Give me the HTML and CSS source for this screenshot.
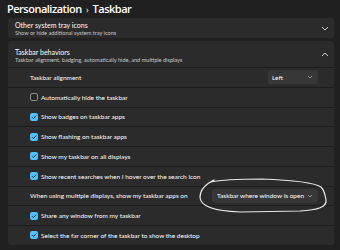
FILE: index.html
```html
<!DOCTYPE html>
<html>
<head>
<meta charset="utf-8">
<link rel="stylesheet" href="styles.css">
</head>
<body>
<div class="page">
  <h1 class="title">Personalization <span class="sep">›</span> Taskbar</h1>
  <div class="cards">
    <div class="card head-card small">
      <div class="head-text">
        <div class="h-title">Other system tray icons</div>
        <div class="h-sub">Show or hide additional system tray icons</div>
      </div>
      <svg class="chev" width="8" height="5" viewBox="0 0 8 5"><path d="M1 1 L4 4 L7 1" fill="none" stroke="#d0d0d0" stroke-width="1"/></svg>
    </div>
    <div class="card">
      <div class="head-card big">
        <div class="head-text">
          <div class="h-title">Taskbar behaviors</div>
          <div class="h-sub">Taskbar alignment, badging, automatically hide, and multiple displays</div>
        </div>
        <svg class="chev" width="8" height="5" viewBox="0 0 8 5"><path d="M1 4 L4 1 L7 4" fill="none" stroke="#d0d0d0" stroke-width="1"/></svg>
      </div>
      <div class="row">
        <span class="label">Taskbar alignment</span>
        <div class="select sel-left"><span>Left</span><svg width="6" height="4" viewBox="0 0 6 4"><path d="M1 1 L3 3 L5 1" fill="none" stroke="#aaa" stroke-width="0.8"/></svg></div>
      </div>
      <div class="row"><span class="box"></span><span class="label">Automatically hide the taskbar</span></div>
      <div class="row"><span class="box on"><svg viewBox="0 0 8 8"><path d="M2 4.2 L3.4 5.6 L6.2 2.6" fill="none" stroke="#1b1b1b" stroke-width="0.9"/></svg></span><span class="label">Show badges on taskbar apps</span></div>
      <div class="row"><span class="box on"><svg viewBox="0 0 8 8"><path d="M2 4.2 L3.4 5.6 L6.2 2.6" fill="none" stroke="#1b1b1b" stroke-width="0.9"/></svg></span><span class="label">Show flashing on taskbar apps</span></div>
      <div class="row"><span class="box on"><svg viewBox="0 0 8 8"><path d="M2 4.2 L3.4 5.6 L6.2 2.6" fill="none" stroke="#1b1b1b" stroke-width="0.9"/></svg></span><span class="label">Show my taskbar on all displays</span></div>
      <div class="row"><span class="box on"><svg viewBox="0 0 8 8"><path d="M2 4.2 L3.4 5.6 L6.2 2.6" fill="none" stroke="#1b1b1b" stroke-width="0.9"/></svg></span><span class="label">Show recent searches when I hover over the search icon</span></div>
      <div class="row">
        <span class="label">When using multiple displays, show my taskbar apps on</span>
        <div class="select sel-wide"><span>Taskbar where window is open</span><svg width="6" height="4" viewBox="0 0 6 4"><path d="M1 1 L3 3 L5 1" fill="none" stroke="#aaa" stroke-width="0.8"/></svg></div>
      </div>
      <div class="row"><span class="box on"><svg viewBox="0 0 8 8"><path d="M2 4.2 L3.4 5.6 L6.2 2.6" fill="none" stroke="#1b1b1b" stroke-width="0.9"/></svg></span><span class="label">Share any window from my taskbar</span></div>
      <div class="row"><span class="box on"><svg viewBox="0 0 8 8"><path d="M2 4.2 L3.4 5.6 L6.2 2.6" fill="none" stroke="#1b1b1b" stroke-width="0.9"/></svg></span><span class="label">Select the far corner of the taskbar to show the desktop</span></div>
    </div>
  </div>
  <svg class="scribble" width="340" height="250" viewBox="0 0 340 250">
    <path d="M214 180 C206 184 200 190 200 197 C200 206 214 211 240 212 L300 211 C318 210 327 207 326 200 C325 193 324 190 321 187 C313 182 290 180 262 179 C240 179 224 179 211 182" fill="none" stroke="#e8e8e8" stroke-width="1.2" stroke-linecap="round"/>
  </svg>
</div>
</body>
</html>
```
FILE: styles.css
```css
html, body {
  margin: 0;
  padding: 0;
}
body {
  background: #202020;
  width: 340px;
  height: 250px;
  overflow: hidden;
  font-family: "Lato", "Open Sans", sans-serif;
  color: #ffffff;
}
.page {
  position: relative;
  width: 340px;
  height: 250px;
}
.title {
  margin: 0;
  padding: 0 0 0 7px;
  height: 18px;
  line-height: 17px;
  font-family: "Open Sans", sans-serif;
  font-size: 11px;
  font-weight: 600;
  letter-spacing: -0.5px;
  white-space: nowrap;
}
.title .sep {
  font-size: 8px;
  color: #cfcfcf;
  padding: 0 2px;
}
.cards {
  margin: 0 6px 0 8px;
  display: flex;
  flex-direction: column;
  gap: 3px;
}
.card {
  background: #2b2b2b;
  border-radius: 3px;
}
.head-card {
  display: flex;
  align-items: center;
  justify-content: space-between;
  padding: 0 5px 0 7px;
}
.head-card.small {
  height: 20px;
}
.head-card.big {
  height: 26px;
}
.h-title {
  font-size: 7px;
  line-height: 8px;
  color: #ffffff;
}
.h-sub {
  font-size: 5.6px;
  line-height: 7px;
  color: #c8c8c8;
}
.head-card.big .h-title {
  margin-top: 2px;
}
.chev {
  display: block;
}
.row {
  box-sizing: border-box;
  height: 19.75px;
  border-top: 1px solid #1d1d1d;
  display: flex;
  align-items: center;
  padding-left: 22px;
  padding-right: 16px;
  font-size: 6.5px;
}
.label {
  color: #ffffff;
  white-space: nowrap;
}
.box {
  box-sizing: border-box;
  width: 8px;
  height: 8px;
  border-radius: 2px;
  border: 1px solid #8e8e8e;
  background: #262626;
  margin-right: 3px;
  flex: none;
  display: flex;
}
.box.on {
  border: none;
  background: #4cc2ff;
}
.box svg {
  width: 8px;
  height: 8px;
}
.select {
  margin-left: auto;
  background: #373737;
  border-radius: 3px;
  height: 14px;
  display: flex;
  align-items: center;
  justify-content: space-between;
  box-sizing: border-box;
  padding: 0 5px;
  font-size: 6.5px;
  color: #ffffff;
  white-space: nowrap;
  flex: none;
}
.select svg {
  display: block;
}
.sel-left {
  width: 50px;
  padding-left: 4px;
}
.sel-wide {
  width: 106px;
}
.scribble {
  position: absolute;
  left: 0;
  top: 0;
  pointer-events: none;
}
```
